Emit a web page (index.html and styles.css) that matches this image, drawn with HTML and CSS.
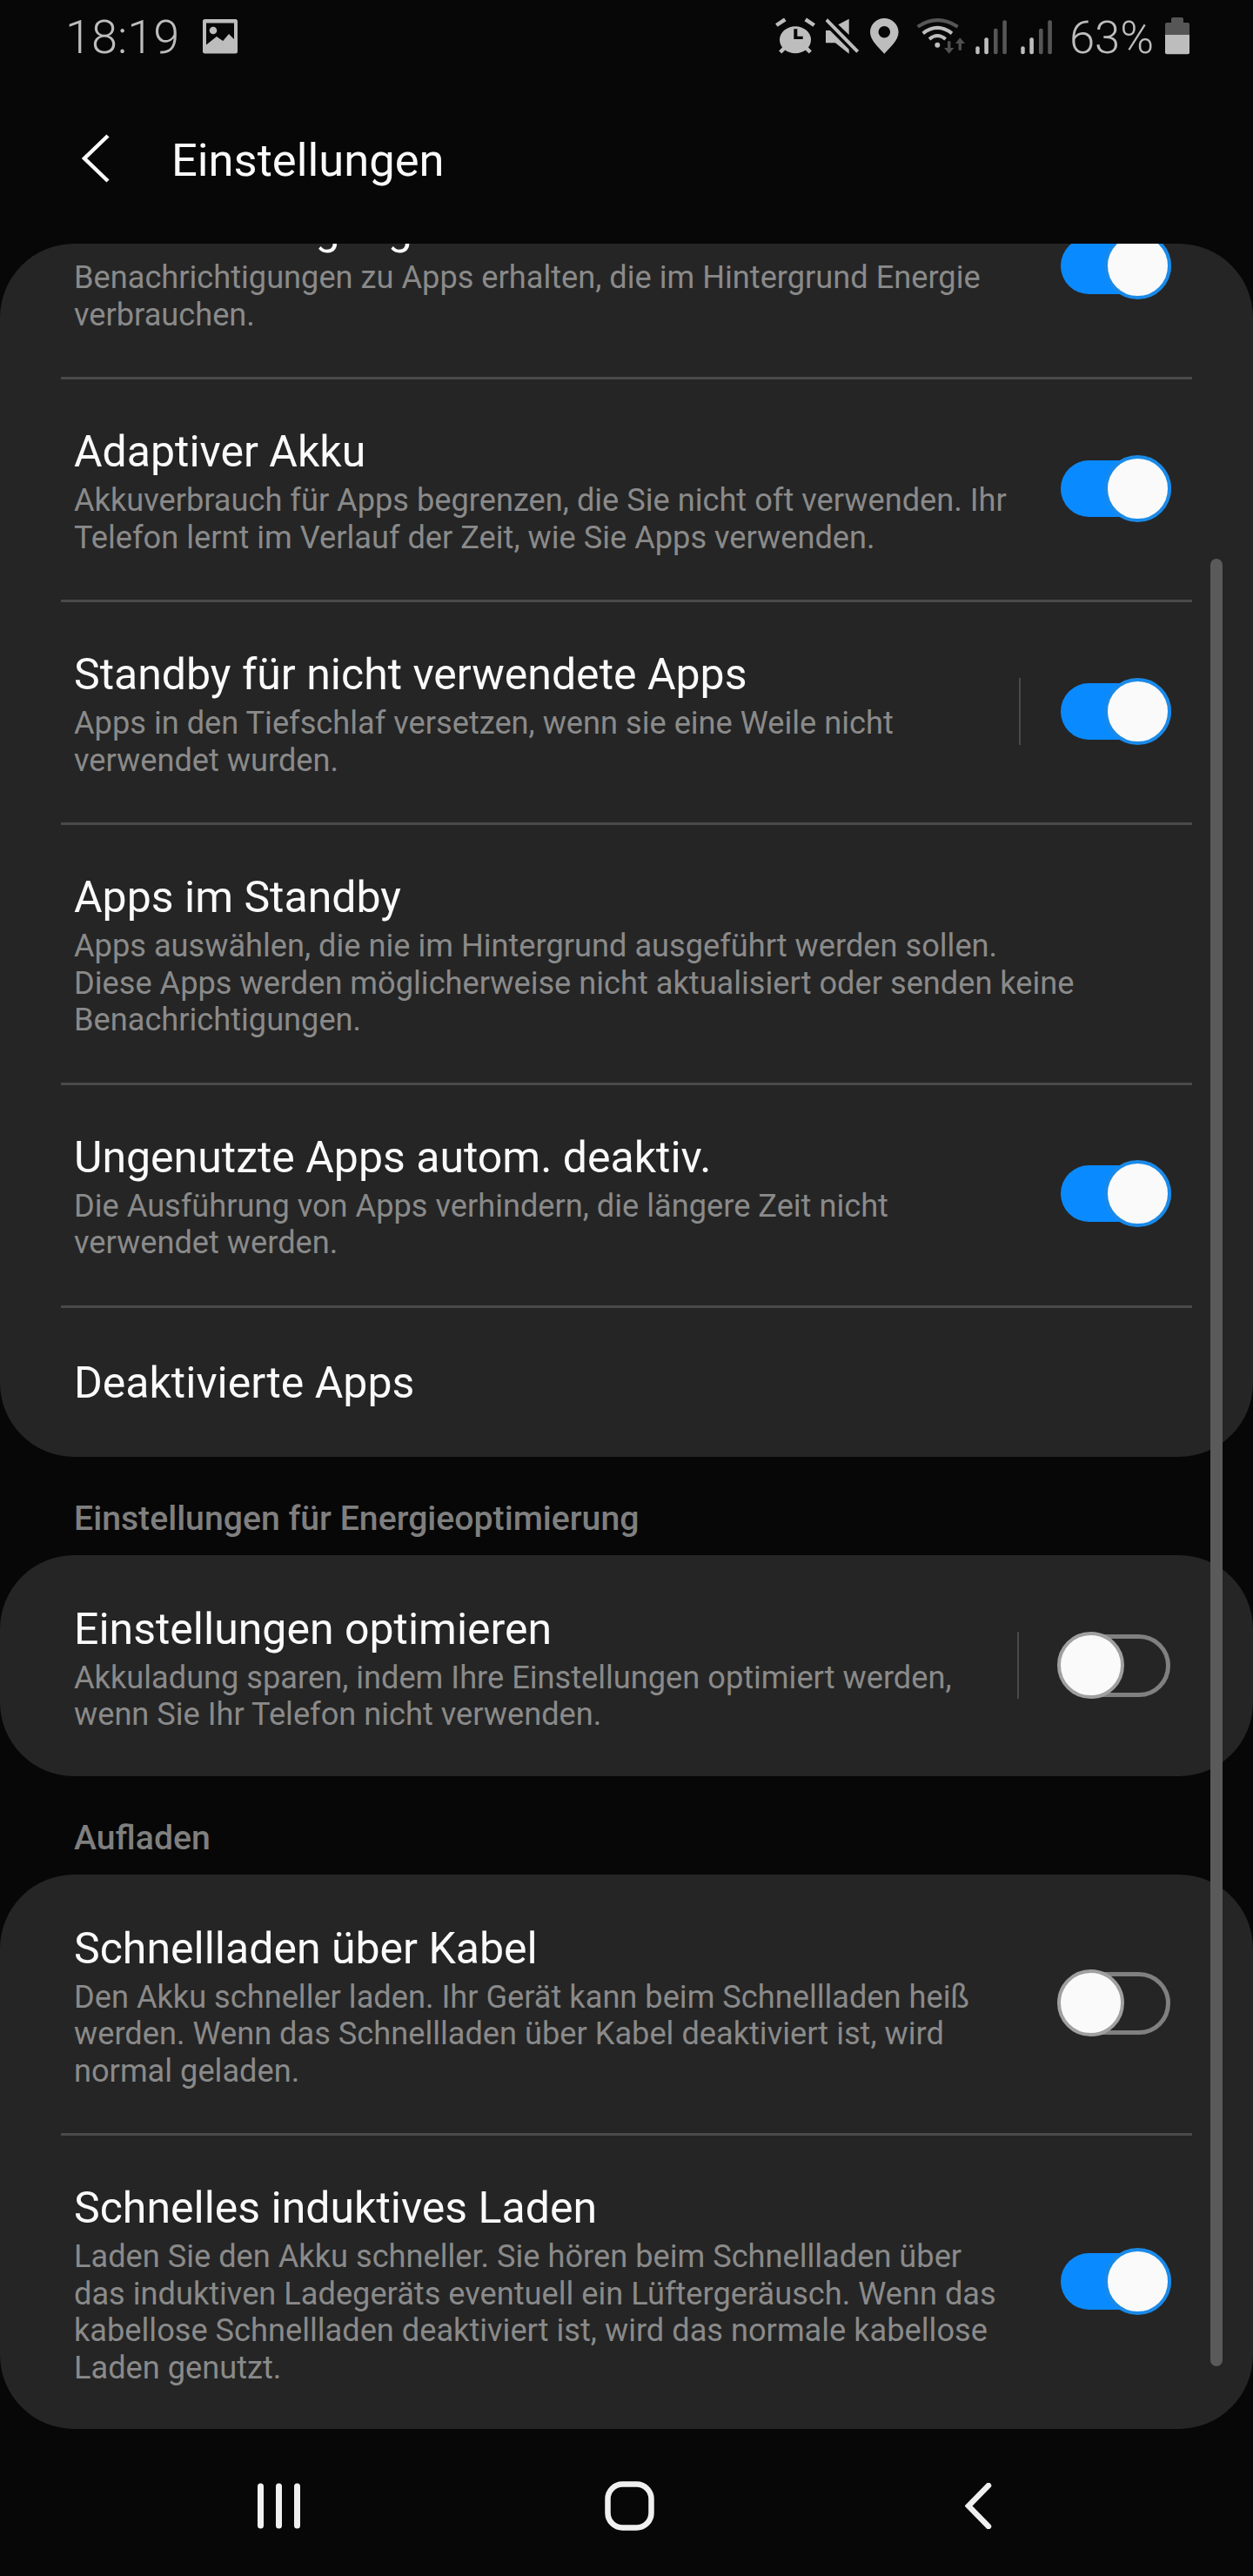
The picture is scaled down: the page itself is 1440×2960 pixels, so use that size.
FILE: index.html
```html
<!DOCTYPE html>
<html lang="de">
<head>
    <meta charset="UTF-8">
    <meta name="viewport" content="width=device-width, initial-scale=1.0">
    <title>Einstellungen</title>
    <link rel="stylesheet" href="styles.css">
</head>
<body>

<div class="phone">
    <div class="status-bar">
        <div class="status-left">
            <span class="clock">18:19</span>
            <svg class="ic-image" width="40" height="40" viewBox="0 0 40 40">
                <path fill="#bdbdbd" fill-rule="evenodd" d="M2.500 0h35a2.500 2.500 0 0 1 2.500 2.500v34.500a2.500 2.500 0 0 1-2.500 2.500h-35a2.500 2.500 0 0 1-2.500-2.500V2.500A2.500 2.500 0 0 1 2.500 0zM4 4.500v25l12-9.400 7.300 5 6.700-8 6 5.900V4.500z"/>
                <circle cx="12" cy="13" r="4.300" fill="#bdbdbd"/>
            </svg>
        </div>
        <div class="status-right">
            <svg class="ic-alarm" width="46" height="42" viewBox="0 0 46 42">
                <ellipse cx="23" cy="25.700" rx="18" ry="15.500" fill="#bdbdbd"/>
                <path fill="#070707" d="M21.300 13.300h4v8.400h6.400V25H21.300z"/>
                <path stroke="#bdbdbd" stroke-width="4.500" d="M1.300 9 11.300 2.300M44.700 9 34.700 2.300M5.700 40l5.600-5.700M40.300 40l-5.600-5.700"/>
            </svg>
            <svg class="ic-mute" width="39" height="42" viewBox="0 0 39 42">
                <path fill="#bdbdbd" d="M0 15h5l21.700 21.700v5L11 29.300H0zM14.300 8.300l12.400-6.600V20z"/>
                <path stroke="#bdbdbd" stroke-width="4" d="M.7 2.700l36 36.600"/>
            </svg>
            <svg class="ic-pin" width="33" height="42" viewBox="0 0 33 42">
                <path fill="#bdbdbd" fill-rule="evenodd" d="M16.300 1c9 0 16.300 7 16.300 16 0 9-9 17-16.300 24.700C9 34 0 26 0 17 0 8 7.300 1 16.300 1zm0 9a6.800 6.800 0 1 0 0 13.600 6.800 6.800 0 0 0 0-13.600z"/>
            </svg>
            <svg class="ic-wifi" width="56" height="42" viewBox="0 0 56 42">
                <path fill="none" stroke="#565656" stroke-width="4" d="M1.700 10.700Q24.300-4.500 47.700 10.700"/>
                <path fill="none" stroke="#bdbdbd" stroke-width="4" d="M7.700 18.300Q24.300 5.500 41 18.300M15 25Q24.300 17 33.700 25"/>
                <circle cx="24.300" cy="31.700" r="3" fill="#bdbdbd"/>
                <path fill="#4f4f4f" d="M36 27.300h3.500V35h3.800l-5.600 6.700L32 35h4zM48.500 37.700V30H45l5.300-6.700L56 30h-4v7.700z"/>
            </svg>
            <svg class="ic-signal" width="36" height="43" viewBox="0 0 36 43">
                <rect x=".3" y="33.300" width="4.400" height="9" rx="2" fill="#bdbdbd"/>
                <rect x="10.300" y="23.300" width="4.600" height="19" rx="2" fill="#bdbdbd"/>
                <rect x="21" y="12.700" width="4.600" height="29.600" rx="2" fill="#565656"/>
                <rect x="31.300" y="3.300" width="4.600" height="39" rx="2" fill="#565656"/>
            </svg>
            <svg class="ic-signal ic-signal-2" width="36" height="43" viewBox="0 0 36 43">
                <rect x=".3" y="33.300" width="4.400" height="9" rx="2" fill="#bdbdbd"/>
                <rect x="10.300" y="23.300" width="4.600" height="19" rx="2" fill="#bdbdbd"/>
                <rect x="21" y="12.700" width="4.600" height="29.600" rx="2" fill="#565656"/>
                <rect x="31.300" y="3.300" width="4.600" height="39" rx="2" fill="#565656"/>
            </svg>
            <span class="battery-text">63%</span>
            <svg class="ic-battery" width="28" height="43" viewBox="0 0 28 43">
                <path fill="#565656" d="M9 0h10a2 2 0 0 1 2 2v4h5a2 2 0 0 1 2 2v12H0V8a2 2 0 0 1 2-2h5V2a2 2 0 0 1 2-2z"/>
                <path fill="#bdbdbd" d="M0 20h28v20.300a2 2 0 0 1-2 2H2a2 2 0 0 1-2-2z"/>
            </svg>
        </div>
    </div>

    <div class="app-bar">
        <svg class="back-icon" width="36" height="58" viewBox="0 0 36 58">
            <path fill="none" stroke="#fafafa" stroke-width="4.500" d="M33 3 6 29l27 26"/>
        </svg>
        <h1 class="page-title">Einstellungen</h1>
    </div>

    <div class="card">
        <div class="clip-inner">
            <div class="row">
                <div class="row-text">
                    <div class="row-title">Benachrichtigungen</div>
                    <div class="row-desc">Benachrichtigungen zu Apps erhalten, die im Hintergrund Energie<br>verbrauchen.</div>
                </div>
                <div class="toggle on"><span class="knob"></span></div>
            </div>
            <div class="row">
                <div class="row-text">
                    <div class="row-title">Adaptiver Akku</div>
                    <div class="row-desc">Akkuverbrauch für Apps begrenzen, die Sie nicht oft verwenden. Ihr<br>Telefon lernt im Verlauf der Zeit, wie Sie Apps verwenden.</div>
                </div>
                <div class="toggle on"><span class="knob"></span></div>
            </div>
            <div class="row">
                <div class="row-text">
                    <div class="row-title">Standby für nicht verwendete Apps</div>
                    <div class="row-desc">Apps in den Tiefschlaf versetzen, wenn sie eine Weile nicht<br>verwendet wurden.</div>
                </div>
                <span class="v-line"></span>
                <div class="toggle on"><span class="knob"></span></div>
            </div>
            <div class="row">
                <div class="row-text">
                    <div class="row-title">Apps im Standby</div>
                    <div class="row-desc">Apps auswählen, die nie im Hintergrund ausgeführt werden sollen.<br>Diese Apps werden möglicherweise nicht aktualisiert oder senden keine<br>Benachrichtigungen.</div>
                </div>
            </div>
            <div class="row">
                <div class="row-text">
                    <div class="row-title">Ungenutzte Apps autom. deaktiv.</div>
                    <div class="row-desc">Die Ausführung von Apps verhindern, die längere Zeit nicht<br>verwendet werden.</div>
                </div>
                <div class="toggle on"><span class="knob"></span></div>
            </div>
            <div class="row row-single">
                <div class="row-text">
                    <div class="row-title">Deaktivierte Apps</div>
                </div>
            </div>
        </div>
    </div>

    <div class="section-label">Einstellungen für Energieoptimierung</div>
    <div class="card">
        <div class="row row-last">
            <div class="row-text">
                <div class="row-title">Einstellungen optimieren</div>
                <div class="row-desc">Akkuladung sparen, indem Ihre Einstellungen optimiert werden,<br>wenn Sie Ihr Telefon nicht verwenden.</div>
            </div>
            <span class="v-line"></span>
            <div class="toggle off"><span class="knob"></span></div>
        </div>
    </div>

    <div class="section-label">Aufladen</div>
    <div class="card">
        <div class="row">
            <div class="row-text">
                <div class="row-title">Schnellladen über Kabel</div>
                <div class="row-desc">Den Akku schneller laden. Ihr Gerät kann beim Schnellladen heiß<br>werden. Wenn das Schnellladen über Kabel deaktiviert ist, wird<br>normal geladen.</div>
            </div>
            <div class="toggle off"><span class="knob"></span></div>
        </div>
        <div class="row row-last">
            <div class="row-text">
                <div class="row-title">Schnelles induktives Laden</div>
                <div class="row-desc">Laden Sie den Akku schneller. Sie hören beim Schnellladen über<br>das induktiven Ladegeräts eventuell ein Lüftergeräusch. Wenn das<br>kabellose Schnellladen deaktiviert ist, wird das normale kabellose<br>Laden genutzt.</div>
            </div>
            <div class="toggle on"><span class="knob"></span></div>
        </div>
    </div>

    <div class="nav-bar">
        <svg width="49" height="53" viewBox="0 0 49 53">
            <path stroke="#f0f0f0" stroke-width="7" stroke-linecap="round" d="M3.500 4v45M24.500 4v45M45.500 4v45"/>
        </svg>
        <svg class="nav-home" width="57" height="57" viewBox="0 0 57 57">
            <rect x="3.500" y="3.500" width="50" height="50" rx="17" fill="none" stroke="#f0f0f0" stroke-width="6.500"/>
        </svg>
        <svg width="31" height="53" viewBox="0 0 31 53">
            <path fill="none" stroke="#f0f0f0" stroke-width="6.500" stroke-linecap="round" d="M27 3 4 26.500 27 50"/>
        </svg>
    </div>

    <div class="scrollbar"></div>
</div>

</body>
</html>
```

FILE: styles.css
```css
* {
    box-sizing: border-box;
}
body {
    margin: 0;
    padding: 0;
    background-color: #070707;
    font-family: Roboto, "Liberation Sans", sans-serif;
}
.phone {
    position: relative;
    width: 1440px;
    height: 2960px;
    overflow: hidden;
    background-color: #070707;
}

/* status bar */
.status-bar {
    display: flex;
    justify-content: space-between;
    height: 84px;
    padding: 20px 73px 0 75px;
    color: #bdbdbd;
}
.status-left, .status-right {
    display: flex;
    align-items: flex-start;
}
.clock {
    font-size: 54px;
    font-weight: 300;
    line-height: 46px;
}
.ic-image {
    margin: 2px 0 0 27px;
}
.ic-mute {
    margin-left: 12px;
}
.ic-pin {
    margin-left: 12px;
}
.ic-wifi {
    margin-left: 20px;
}
.ic-signal {
    margin-left: 12px;
}
.ic-signal-2 {
    margin-left: 16px;
}
.battery-text {
    margin-left: 20px;
    font-size: 52.500px;
    font-weight: 300;
    line-height: 46px;
}
.ic-battery {
    margin-left: 13px;
}

/* app bar */
.app-bar {
    display: flex;
    align-items: center;
    height: 196px;
    padding: 0 0 0 91px;
}
.page-title {
    margin: 3px 0 0 70px;
    font-size: 52.500px;
    font-weight: 400;
    color: #fafafa;
}

/* cards */
.card {
    background-color: #252525;
    border-radius: 85px;
    overflow: hidden;
}
.clip-inner {
    margin-top: -102px;
}
.row {
    display: flex;
    align-items: center;
    position: relative;
    padding: 56px 50px 51px 85px;
}
.row + .row::before {
    content: "";
    position: absolute;
    top: -1px;
    left: 70px;
    right: 70px;
    height: 3px;
    background-color: #4a4a4a;
}
.row-single {
    padding: 59px 50px 56px 85px;
}
.row-last {
    padding-bottom: 49px;
}
.row-text {
    flex: 1;
}
.row-title {
    font-size: 50px;
    line-height: 58px;
    color: #fafafa;
}
.row-desc {
    margin-top: 6px;
    font-size: 36.200px;
    line-height: 42.500px;
    color: #8a8a8a;
    white-space: nowrap;
}
.section-label {
    height: 113px;
    padding: 50px 0 0 85px;
    font-size: 39.200px;
    font-weight: 500;
    line-height: 42px;
    color: #7f7f7f;
}
.v-line {
    width: 2px;
    height: 77px;
    margin: 0 46px 7px 0;
    background-color: #4a4a4a;
}

/* switches */
.toggle {
    position: relative;
    width: 127px;
    height: 65px;
    margin: 0 44px 7px 0;
    flex-shrink: 0;
    border-radius: 36px;
}
.toggle.on {
    background-color: #0a8aff;
}
.toggle.off {
    width: 128px;
    height: 72px;
    margin-right: 45px;
    border: 5px solid #808080;
}
.knob {
    position: absolute;
    top: -6px;
    right: 0;
    width: 77px;
    height: 77px;
    border-radius: 50%;
    background-color: #fafafa;
    border: 4px solid #1a8ae8;
}
.toggle.off .knob {
    top: -7.500px;
    right: auto;
    left: -7px;
    border-color: #a0a0a0;
}

/* bottom navigation */
.nav-bar {
    position: absolute;
    left: 0;
    right: 0;
    top: 2851px;
    display: flex;
    align-items: center;
    height: 57px;
    padding: 0 300px 0 296px;
    justify-content: space-between;
}
.nav-home {
    margin-right: 8px;
}

.scrollbar {
    position: absolute;
    top: 642px;
    left: 1391px;
    width: 14px;
    height: 2077px;
    border-radius: 7px;
    background-color: #5a5a5a;
}
```
